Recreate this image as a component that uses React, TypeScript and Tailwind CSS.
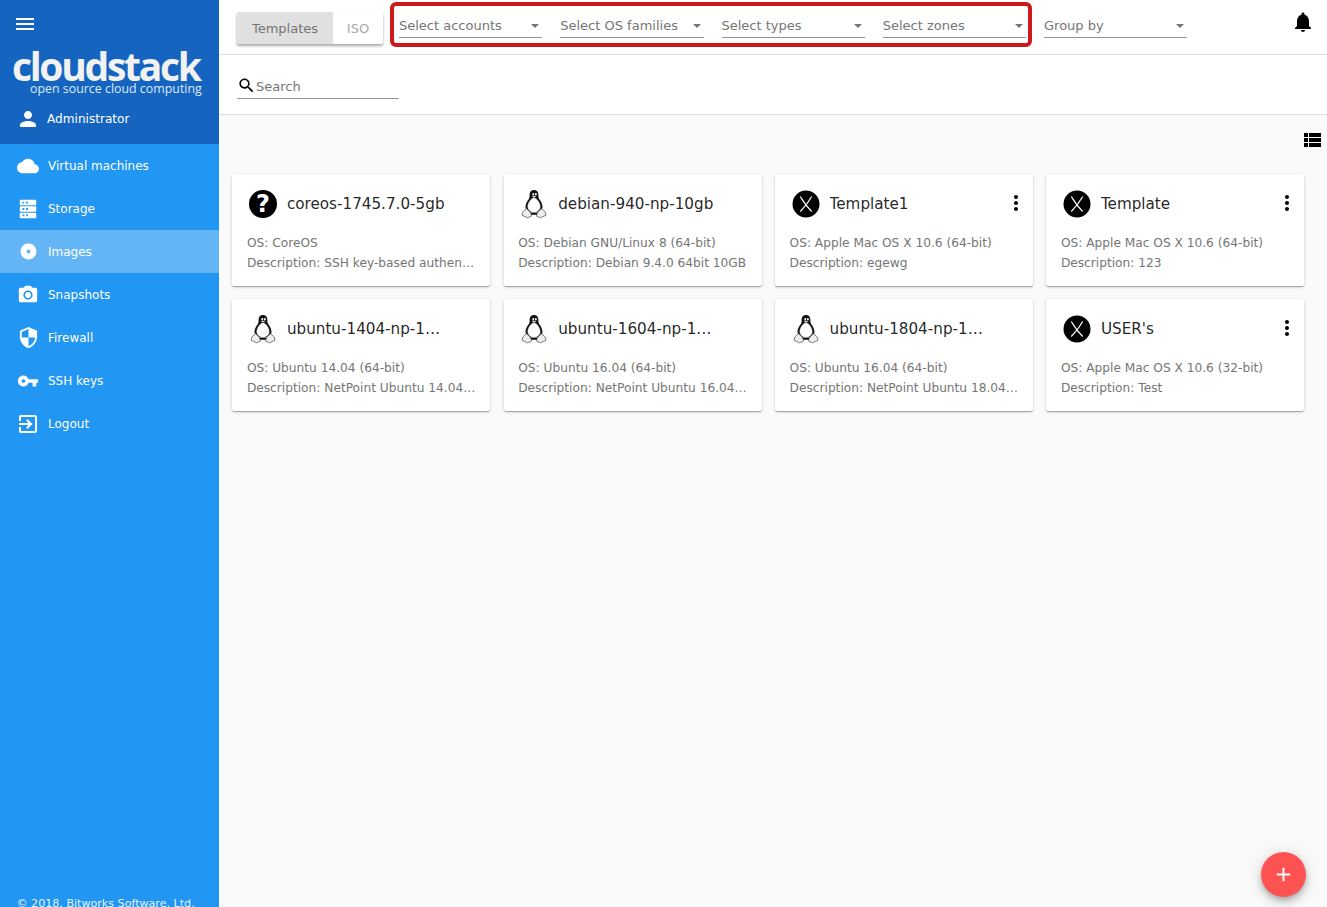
import React from "react";

const dejavu = "font-['DejaVu_Sans',sans-serif]";

function Icon({ d, className }: { d: string; className?: string }) {
  return (
    <svg viewBox="0 0 24 24" className={className} fill="currentColor">
      <path d={d} />
    </svg>
  );
}

const paths = {
  menu: "M3 18h18v-2H3v2zm0-5h18v-2H3v2zm0-7v2h18V6H3z",
  person: "M12 12c2.21 0 4-1.79 4-4s-1.79-4-4-4-4 1.79-4 4 1.79 4 4 4zm0 2c-2.67 0-8 1.34-8 4v2h16v-2c0-2.66-5.33-4-8-4z",
  cloud: "M19.35 10.04C18.67 6.59 15.64 4 12 4 9.11 4 6.6 5.64 5.35 8.04 2.34 8.36 0 10.91 0 14c0 3.31 2.69 6 6 6h13c2.76 0 5-2.24 5-5 0-2.64-2.05-4.78-4.65-4.96z",
  // stacked server blocks, taller than wide
  storage: "M4 2h16a1 1 0 011 1v4a1 1 0 01-1 1H4a1 1 0 01-1-1V3a1 1 0 011-1zm2 2v2h2V4H6zm4 0v2h2V4h-2zM4 9h16a1 1 0 011 1v4a1 1 0 01-1 1H4a1 1 0 01-1-1v-4a1 1 0 011-1zm2 2v2h2v-2H6zm4 0v2h2v-2h-2zM4 16h16a1 1 0 011 1v4a1 1 0 01-1 1H4a1 1 0 01-1-1v-4a1 1 0 011-1zm2 2v2h2v-2H6zm4 0v2h2v-2h-2z",
  disc: "M12 2C6.48 2 2 6.48 2 12s4.48 10 10 10 10-4.48 10-10S17.52 2 12 2zm0 12.500a2.500 2.500 0 110-5 2.500 2.500 0 010 5z",
  camera: "M9 2L7.17 4H4c-1.1 0-2 .9-2 2v12c0 1.1.9 2 2 2h16c1.1 0 2-.9 2-2V6c0-1.1-.9-2-2-2h-3.17L15 2H9zm3 15c-2.76 0-5-2.24-5-5s2.24-5 5-5 5 2.24 5 5-2.24 5-5 5zm0-8.200a3.200 3.200 0 100 6.400 3.200 3.200 0 000-6.400z",
  shield: "M12 1L3 5v6c0 5.55 3.84 10.74 9 12 5.16-1.26 9-6.45 9-12V5l-9-4zm0 10.99h7c-.53 4.12-3.28 7.79-7 8.94V12H5V6.3l7-3.11v8.8z",
  key: "M12.65 10C11.83 7.67 9.61 6 7 6c-3.31 0-6 2.69-6 6s2.69 6 6 6c2.61 0 4.83-1.67 5.65-4H17v4h4v-4h2v-4H12.65zM7 14c-1.1 0-2-.9-2-2s.9-2 2-2 2 .9 2 2-.9 2-2 2z",
  exit: "M10.09 15.59L11.5 17l5-5-5-5-1.41 1.41L12.67 11H3v2h9.67l-2.58 2.59zM19 3H5c-1.11 0-2 .9-2 2v4h2V5h14v14H5v-4H3v4c0 1.1.89 2 2 2h14c1.1 0 2-.9 2-2V5c0-1.1-.9-2-2-2z",
  bell: "M12 22c1.1 0 2-.9 2-2h-4c0 1.1.89 2 2 2zm6-6v-5c0-3.07-1.64-5.64-4.5-6.32V4c0-.83-.67-1.5-1.5-1.5s-1.5.67-1.5 1.5v.68C7.63 5.36 6 7.92 6 11v5l-2 2v1h16v-1l-2-2z",
  search: "M15.5 14h-.79l-.28-.27C15.41 12.59 16 11.11 16 9.5 16 5.91 13.09 3 9.5 3S3 5.91 3 9.5 5.91 16 9.5 16c1.61 0 3.09-.59 4.23-1.57l.27.28v.79l5 4.99L20.49 19l-4.99-5zm-6 0C7.01 14 5 11.99 5 9.5S7.01 5 9.5 5 14 7.01 14 9.5 11.99 14 9.5 14z",
  list: "M4 14h4v-4H4v4zm0 5h4v-4H4v4zm0-10h4V5H4v4zm5 5h12v-4H9v4zm0 5h12v-4H9v4zM9 5v4h12V5H9z",
  more: "M12 8c1.1 0 2-.9 2-2s-.9-2-2-2-2 .9-2 2 .9 2 2 2zm0 2c-1.1 0-2 .9-2 2s.9 2 2 2 2-.9 2-2-.9-2-2-2zm0 6c-1.1 0-2 .9-2 2s.9 2 2 2 2-.9 2-2-.9-2-2-2z",
  add: "M19 13h-6v6h-2v-6H5v-2h6V5h2v6h6v2z",
};

const navItems = [
  { label: "Virtual machines", icon: paths.cloud, size: "h-[22px] w-[22px]" },
  { label: "Storage", icon: paths.storage, size: "h-[22px] w-[22px]" },
  { label: "Images", icon: paths.disc, size: "h-[19px] w-[19px]", active: true },
  { label: "Snapshots", icon: paths.camera, size: "h-[22px] w-[22px]" },
  { label: "Firewall", icon: paths.shield, size: "h-[23px] w-[23px]" },
  { label: "SSH keys", icon: paths.key, size: "h-[22px] w-[22px]" },
  { label: "Logout", icon: paths.exit, size: "h-[24px] w-[24px]" },
];

type Os = "help" | "linux" | "mac";

const templates: { name: string; os: string; desc: string; icon: Os; menu?: boolean }[] = [
  { name: "coreos-1745.7.0-5gb", os: "CoreOS", desc: "SSH key-based authentication", icon: "help" },
  { name: "debian-940-np-10gb", os: "Debian GNU/Linux 8 (64-bit)", desc: "Debian 9.4.0 64bit 10GB", icon: "linux" },
  { name: "Template1", os: "Apple Mac OS X 10.6 (64-bit)", desc: "egewg", icon: "mac", menu: true },
  { name: "Template", os: "Apple Mac OS X 10.6 (64-bit)", desc: "123", icon: "mac", menu: true },
  { name: "ubuntu-1404-np-10gb", os: "Ubuntu 14.04 (64-bit)", desc: "NetPoint Ubuntu 14.04 64bit 10GB", icon: "linux" },
  { name: "ubuntu-1604-np-10gb", os: "Ubuntu 16.04 (64-bit)", desc: "NetPoint Ubuntu 16.04 64bit 10GB", icon: "linux" },
  { name: "ubuntu-1804-np-10gb", os: "Ubuntu 16.04 (64-bit)", desc: "NetPoint Ubuntu 18.04 64bit 10GB", icon: "linux" },
  { name: "USER's", os: "Apple Mac OS X 10.6 (32-bit)", desc: "Test", icon: "mac", menu: true },
];

function Tux() {
  return (
    <svg viewBox="0 0 28 32" className="h-[30px] w-[28px]">
      <path d="M14 1c-3.200 0-4.800 2.400-4.700 5.600.1 2.200-.3 3.400-1.600 5.200C6 14.200 4.600 17 5 20.500L9 25h10l4-4.500c.4-3.500-1-6.300-2.700-8.700-1.300-1.800-1.700-3-1.600-5.200C18.800 3.400 17.200 1 14 1z" fill="#111" />
      <path d="M14 9c-3.200 1-6.800 5.500-6.800 10 0 3 2.800 6 6.800 6s6.800-3 6.800-6c0-4.500-3.600-9-6.800-10z" fill="#fff" stroke="#777" strokeWidth="0.4" />
      <path d="M12.200 5.500a1 1.300 0 102 0 1 1.300 0 10-2 0zm2.800 0a1 1.300 0 102 0 1 1.300 0 10-2 0z" fill="#fff" />
      <path d="M11.800 8c1.200-1 3.200-1 4.400 0-1 1.200-3.400 1.200-4.400 0z" fill="#ccc" />
      <path d="M9.500 25.500h9v2h-9z" fill="#111" />
      <path d="M6 21l-4 3.500-.8 3.500 6 2.700 4.300-2-1.500-4z" fill="#eee" stroke="#555" strokeWidth="0.8" />
      <path d="M22 21l4 3.500.8 3.500-6 2.700-4.300-2 1.500-4z" fill="#eee" stroke="#555" strokeWidth="0.8" />
    </svg>
  );
}

function MacLogo() {
  return (
    <svg viewBox="0 0 28 28" className="h-[28px] w-[28px]">
      <circle cx="14" cy="14" r="13.500" fill="#000" />
      <path d="M8.300 6.500c2.500 4 5 9 11.400 15M19.700 6.500c-2.500 4.500-6 9.500-11.400 15" stroke="#fff" strokeWidth="1.200" fill="none" />
    </svg>
  );
}

function OsIcon({ os }: { os: Os }) {
  if (os === "help") {
    return (
      <div className="flex h-[28px] w-[28px] items-center justify-center rounded-full bg-black text-[24px] font-bold leading-none text-white">
        ?
      </div>
    );
  }
  if (os === "linux") return <Tux />;
  return <MacLogo />;
}

function TemplateCard(props: (typeof templates)[number]) {
  const { name, os, desc, icon, menu } = props;
  return (
    <article className="flex h-[112px] min-w-0 flex-col rounded-[2px] bg-white pl-[14.600px] pr-[13.400px] shadow-[0_1px_3px_rgba(0,0,0,0.2),0_1px_1px_rgba(0,0,0,0.14),0_2px_1px_-1px_rgba(0,0,0,0.12)]">
      <div className="relative mt-[15px] flex h-[30px] items-center">
        <div className="flex w-[40px] shrink-0 justify-start pl-[2px]">
          <OsIcon os={icon} />
        </div>
        <h3 className="w-[160px] truncate text-[15.200px] leading-[30px] text-[rgba(0,0,0,0.87)]">{name}</h3>
        {menu && <Icon d={paths.more} className="absolute right-[-8px] top-[2px] h-[24px] w-[24px] text-black" />}
      </div>
      <div className="mt-[14px] text-[12.200px] leading-[20px] text-[#757575]">
        <p className="truncate">OS: {os}</p>
        <p className="truncate">Description: {desc}</p>
      </div>
    </article>
  );
}

function FilterSelect({ label }: { label: string }) {
  return (
    <div className="flex h-[24px] w-[143.250px] items-center justify-between border-b border-[#949494] text-[13px] text-[#757575]">
      <span>{label}</span>
      <span className="mr-[3px] h-0 w-0 border-x-[4px] border-t-[4px] border-x-transparent border-t-[#757575]" />
    </div>
  );
}

export default function App() {
  return (
    <div className={`relative flex h-[907px] w-[1327px] overflow-hidden bg-[#fafafa] ${dejavu}`}>
      {/* SIDEBAR */}
      <aside className="flex h-full w-[219px] shrink-0 flex-col bg-[#2196f3] text-white">
        <div className="h-[144px] bg-[#1565c0] pt-[12px]">
          <Icon d={paths.menu} className="ml-[13px] h-[24px] w-[24px]" />
          <div className="mt-[10px] ml-[12px] font-['Open_Sans',sans-serif] text-[39px] font-bold leading-[40px] tracking-[-2.300px] text-[#f2f2f2]">
            cloudstack
          </div>
          <div className="-mt-[4px] ml-[30px] font-['Open_Sans',sans-serif] text-[12.400px] leading-[14px] text-[#dbe9f8]">
            open source cloud computing
          </div>
          <div className="mt-[11px] flex h-[24px] items-center text-[12.100px]">
            <Icon d={paths.person} className="ml-[16px] h-[24px] w-[24px]" />
            <span className="ml-[7px]">Administrator</span>
          </div>
        </div>
        <nav className="flex flex-col">
          {navItems.map((item) => (
            <div key={item.label} className={`flex h-[43px] items-center text-[12px] ${item.active ? "bg-[#64b5f6]" : ""}`}>
              <div className="ml-[16px] flex w-[24px] justify-center">
                <Icon d={item.icon} className={item.size} />
              </div>
              <span className="ml-[8px]">{item.label}</span>
            </div>
          ))}
        </nav>
        <div className="mt-auto -mb-[4px] pl-[16.500px] text-[11.100px] leading-[14px] text-[#e3f2fd]">© 2018, Bitworks Software, Ltd.</div>
      </aside>

      {/* MAIN */}
      <main className="flex min-w-0 flex-1 flex-col">
        <header className="flex h-[55px] items-start border-b border-[#e0e0e0] bg-white">
          <div className="ml-[18px] mt-[12px] flex h-[32px] rounded-[2px] bg-white text-[13px] shadow-[0_2px_3px_rgba(0,0,0,0.35)]">
            <div className="flex w-[96px] items-center justify-center rounded-l-[2px] bg-[#e0e0e0] pt-[1px] text-[#757575]">Templates</div>
            <div className="flex w-[50px] items-center justify-center pt-[1px] text-[#a8a8a8]">ISO</div>
          </div>
          <div className="ml-[16px] mt-[14px] flex gap-[18px]">
            {["Select accounts", "Select OS families", "Select types", "Select zones", "Group by"].map((label) => (
              <FilterSelect key={label} label={label} />
            ))}
          </div>
          <Icon d={paths.bell} className="ml-[104px] mt-[10px] h-[24px] w-[24px] text-black" />
        </header>

        <div className="flex h-[60px] items-start border-b border-[#e0e0e0] bg-white pl-[18px] pt-[18px]">
          <div className="flex h-[26px] w-[162px] items-center border-b border-[#949494] text-[13px] text-[#757575]">
            <Icon d={paths.search} className="h-[19px] w-[19px] text-black" />
            <span className="mt-[3px]">Search</span>
          </div>
        </div>

        <div className="flex justify-end pr-[3.500px] pt-[13px]">
          <Icon d={paths.list} className="h-[24px] w-[24px] text-black" />
        </div>

        <div className="ml-[13.300px] mt-[22px] grid w-[1072px] grid-cols-4 gap-x-[13.330px] gap-y-[13px]">
          {templates.map((t) => (
            <TemplateCard key={t.name} {...t} />
          ))}
        </div>
      </main>

      {/* overlays */}
      <div className="absolute left-[390px] top-[2px] h-[45px] w-[642px] rounded-[6px] border-[4px] border-[#cc1a1a]" />
      <button className="absolute left-[1261px] top-[852px] flex h-[45px] w-[45px] items-center justify-center rounded-full bg-[#ff5252] text-white shadow-[0_3px_5px_-1px_rgba(0,0,0,0.2),0_6px_10px_rgba(0,0,0,0.14),0_1px_18px_rgba(0,0,0,0.12)]">
        <Icon d={paths.add} className="h-[23px] w-[23px]" />
      </button>
    </div>
  );
}
